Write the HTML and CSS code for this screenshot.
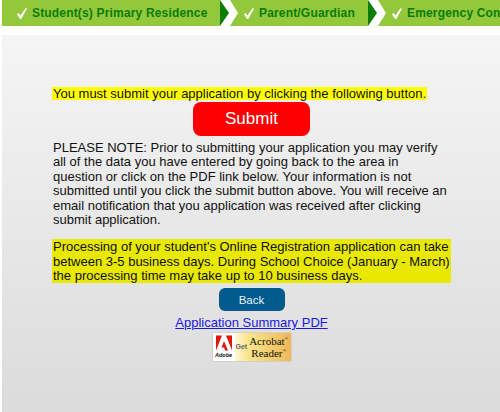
FILE: index.html
```html
<!DOCTYPE html>
<html lang="en">
<head>
<meta charset="utf-8">
<title>Submit Application</title>
<link rel="stylesheet" href="styles.css">
</head>
<body>
<nav class="steps">
  <div class="step step-first">
    <svg class="check" viewBox="0 0 10 11" width="10" height="11"><path d="M0 6.2L1.6 5L3.4 7.6L8.8 0L10 .8L4.2 11H3Z" fill="#fff"/></svg>
    <span>Student(s) Primary Residence</span>
  </div>
  <svg class="sep" viewBox="0 0 18 26" width="18" height="26"><path d="M0 0H10L18 13L10 26H0Z" fill="#fff"/><path d="M0 0L9 13L0 26Z" fill="#0a7d06"/></svg>
  <div class="step step-next step-second">
    <svg class="check" viewBox="0 0 10 11" width="10" height="11"><path d="M0 6.2L1.6 5L3.4 7.6L8.8 0L10 .8L4.2 11H3Z" fill="#fff"/></svg>
    <span>Parent/Guardian</span>
  </div>
  <svg class="sep" viewBox="0 0 18 26" width="18" height="26"><path d="M0 0H10L18 13L10 26H0Z" fill="#fff"/><path d="M0 0L9 13L0 26Z" fill="#0a7d06"/></svg>
  <div class="step step-next step-third">
    <svg class="check" viewBox="0 0 10 11" width="10" height="11"><path d="M0 6.2L1.6 5L3.4 7.6L8.8 0L10 .8L4.2 11H3Z" fill="#fff"/></svg>
    <span>Emergency Contacts</span>
  </div>
</nav>
<main class="panel">
  <p class="notice"><span class="hl-yellow">You must submit your application by clicking the following button.</span></p>
  <div class="center"><button class="submit">Submit</button></div>
  <p class="note">PLEASE NOTE: Prior to submitting your application you may verify all of the data you have entered by going back to the area in question or click on the PDF link below. Your information is not submitted until you click the submit button above. You will receive an email notification that you application was received after clicking submit application.</p>
  <p class="processing">Processing of your student's Online Registration application can take between 3-5 business days. During School Choice (January - March) the processing time may take up to 10 business days.</p>
  <div class="center"><button class="back">Back</button></div>
  <div class="center"><a class="pdf" href="#">Application Summary PDF</a></div>
  <div class="center">
    <div class="adobe">
      <div class="adobe-logo">
        <svg viewBox="0 0 16 16" width="16" height="17"><path d="M0 0H6L0 15Z M10 0H16V15Z M8 5.5L12 15H9.2L8 12H5.5Z" fill="#e3160f"/></svg>
        <span>Adobe</span>
      </div>
      <span class="get">Get</span>
      <span class="reader">Acrobat<sup>®</sup><br>Reader<sup>®</sup></span>
    </div>
  </div>
</main>
</body>
</html>
```
FILE: styles.css
```css
* { box-sizing: border-box; }
html, body { margin: 0; padding: 0; }
body {
  width: 500px; height: 412px; overflow: hidden; background: #fff;
  font-family: "Liberation Sans", Arial, sans-serif; color: #111;
}
.steps { display: flex; height: 26px; width: 500px; overflow: hidden; padding-left: 2px; white-space: nowrap; }
.step {
  display: flex; align-items: center; flex: none; height: 26px; background: #93c83d;
  color: #0a7d06; font-weight: bold; font-size: 12px; letter-spacing: 0.17px;
}
.step-first { width: 218px; padding-left: 15px; }
.step-next { padding-left: 24px; }
.step-second { width: 148px; }
.step-third { width: 160px; }
.check { flex: none; margin-right: 5px; }
.sep { flex: none; margin-right: -18px; position: relative; z-index: 1; }
.panel {
  margin: 9px 0 0 2px; height: 377px; padding: 52px 49px 0 50px;
  background: linear-gradient(#f5f5f5, #dbdbdb);
  font-size: 13px; line-height: 14.4px;
}
p { margin: 0; }
.notice { height: 13px; line-height: 13px; }
.hl-yellow { display: inline-block; background: #ffff00; padding: 0 1px; height: 13px; line-height: 13px; }
.note { margin-top: 5px; padding: 0 1px; }
.processing { margin-top: 12px; background: #e8e800; padding: 1px 1px 0; line-height: 14.2px; }
.center { display: flex; justify-content: center; }
.submit {
  display: block; width: 117px; height: 34px; margin: 2px 0 0; border: 0; border-radius: 8px;
  background: #ff0000; color: #fff; font: 17px "Liberation Sans", Arial, sans-serif;
}
.back {
  display: block; width: 66px; height: 23px; margin: 5px 0 0; border: 0; border-radius: 6px;
  background: #005a8c; color: #e8f4fa; font: 11.5px "Liberation Sans", Arial, sans-serif;
}
.pdf { display: block; margin-top: 4px; color: #1a1ae6; font-size: 13px; line-height: 16px; }
.adobe {
  display: flex; align-items: center; width: 78px; height: 28px; margin-top: 2px;
  background: linear-gradient(90deg, #fdfbe8 0 25%, #fbe58a 45%, #eeb858 100%);
  overflow: hidden; color: #111; box-shadow: 0 0 1px #888;
}
.adobe-logo { width: 22px; height: 28px; flex: none; background: #fff; display: flex; flex-direction: column; align-items: center; padding-top: 2px; }
.adobe-logo span { font-size: 5.5px; line-height: 7px; font-weight: bold; font-style: italic; }
.get { font-size: 7px; color: #666; font-weight: bold; margin: 0 2px 0 1px; flex: none; }
.reader { font: 11px/12px "Liberation Serif", serif; text-align: center; white-space: nowrap; flex: none; }
.reader sup { font-size: 5px; line-height: 0; }
```
